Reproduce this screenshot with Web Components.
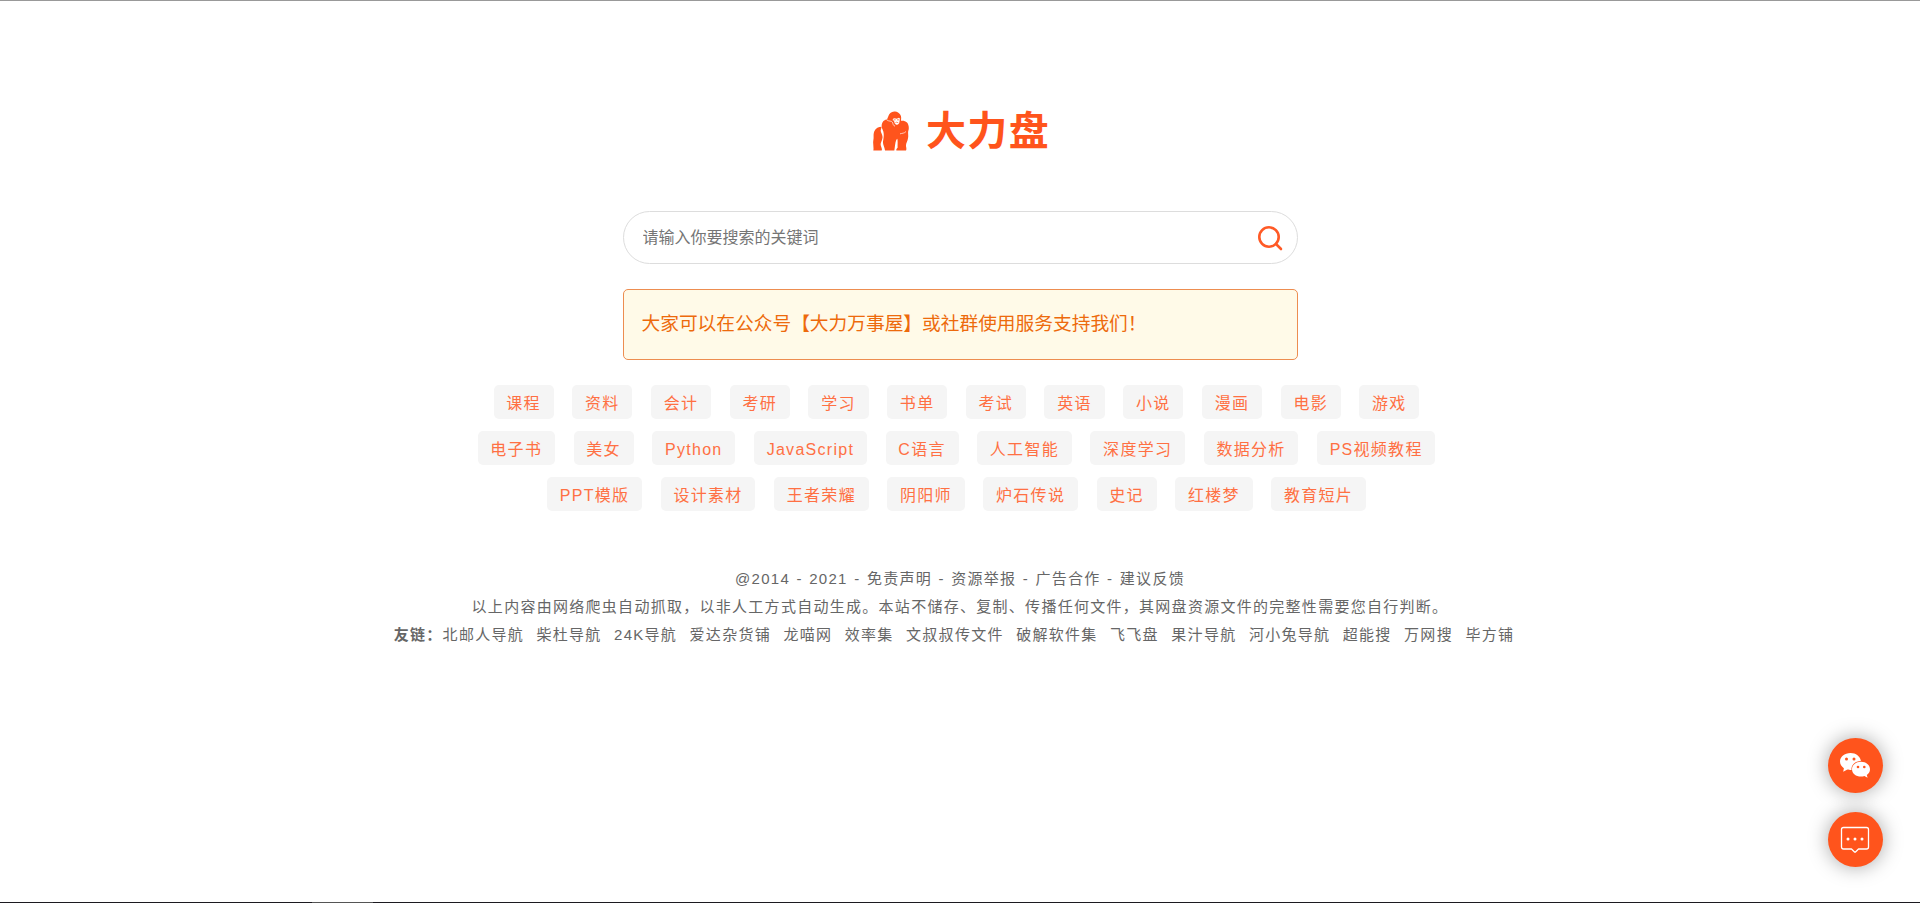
<!DOCTYPE html>
<html lang="zh-CN">
<head>
<meta charset="utf-8">
<title>大力盘</title>
<style>
html {
	height: 100%;
}

body {
	margin: 0;
	min-height: 100%;
	font-family: "Liberation Sans", "Noto Sans CJK SC", sans-serif;
	font-size: 16px;
	letter-spacing: 0.08em;
	color: #666;
	background: #fff;
}
</style>
</head>
<body>
<dali-page>
	<dali-logo>大力盘</dali-logo>
	<dali-search placeholder="请输入你要搜索的关键词"></dali-search>
	<dali-notice>大家可以在公众号【大力万事屋】或社群使用服务支持我们！</dali-notice>
	<dali-tags></dali-tags>
	<dali-footer></dali-footer>
	<dali-float slot="float"></dali-float>
</dali-page>

<script>
const TAGS = [
	'课程', '资料', '会计', '考研', '学习', '书单', '考试', '英语', '小说', '漫画', '电影', '游戏',
	'电子书', '美女', 'Python', 'JavaScript', 'C语言', '人工智能', '深度学习', '数据分析', 'PS视频教程',
	'PPT模版', '设计素材', '王者荣耀', '阴阳师', '炉石传说', '史记', '红楼梦', '教育短片',
];

const ABOUT = ['免责声明', '资源举报', '广告合作', '建议反馈'];

const FRIENDS = [
	'北邮人导航', '柴杜导航', '24K导航', '爱达杂货铺', '龙喵网', '效率集', '文叔叔传文件',
	'破解软件集', '飞飞盘', '果汁导航', '河小兔导航', '超能搜', '万网搜', '毕方铺',
];

const link = (text) => `<a href="#">${text}</a>`;

// Every element here only needs a style and some markup
class DaliElement extends HTMLElement {
	constructor() {
		super();
		this.root = this.attachShadow({ mode: 'open' });
		this.root.innerHTML = `<style>${this.css()}</style>${this.html()}`;
	}
}

class DaliPage extends DaliElement {
	css() {
		return `
		:host {
			display: flex;
			flex-direction: column;
			box-sizing: border-box;
			min-height: 100vh;
			border-top: 1px solid #999;
		}
		main {
			flex: 1;
			display: flex;
			flex-direction: column;
			align-items: center;
			padding-top: 100px;
		}
		.strip {
			height: 1px;
			background: linear-gradient(90deg, #1c1a20 312px, #555 312px, #555 373px, #1c1a20 373px);
		}`;
	}

	html() {
		return `<main><slot></slot></main><slot name="float"></slot><div class="strip"></div>`;
	}
}

class DaliLogo extends DaliElement {
	css() {
		return `
		:host {
			display: block;
			padding-left: 3px;
			color: #ff541c;
		}
		h1 {
			display: flex;
			align-items: center;
			gap: 17px;
			margin: 0;
			font-size: 40px;
			line-height: 60px;
		}
		svg {
			width: 36px;
			height: 40px;
		}`;
	}

	html() {
		return `<h1>
			<svg viewBox="40 35 108 119" aria-hidden="true">
				<g fill="#ff541c">
					<path d="M66 82C57 82 48 86 44 95C40 105 43 113 41 122C39 133 43 143 41 153H66C69 147 62 141 63 133C64 127 67 124 68 117C71 107 63 100 63 93Z"/>
					<path d="M82 60C74 60 67 67 66 78C65 87 72 93 72 102C73 112 71 119 70 127C69 135 75 143 76 153H104C106 142 106 131 110 121L113 118C115 128 113 138 114 144L110 149V153H139C141 149 140 144 139 140C138 132 144 125 145 116C147 108 144 101 146 94C149 85 147 75 142 69C137 64 130 63 124 64C124 57 126 52 122 46C118 39 111 35 104 36C94 37 88 43 86 50Z"/>
				</g>
				<g fill="#fff">
					<path d="M100 58L105 56L111 58L118 55L121 58L119 69C118 74 114 77 109 75C105 74 104 68 103 64L99 62Z"/>
				</g>
				<g fill="none" stroke="#ff541c" stroke-width="2">
					<path d="M102 61H108M112 61H119M107 70L111 68L116 70"/>
				</g>
				<path d="M81 61C89 67 95 63 98 68C101 75 100 78 106 80M139 96C134 102 127 101 121 103" fill="none" stroke="#fff" stroke-width="2"/>
			</svg>
			<slot></slot>
		</h1>`;
	}
}

class DaliSearch extends DaliElement {
	connectedCallback() {
		const input = this.root.querySelector('input');
		input.placeholder = this.getAttribute('placeholder');
		input.setAttribute('aria-label', input.placeholder);
	}

	css() {
		return `
		:host {
			display: block;
			box-sizing: border-box;
			width: 675px;
			max-width: 100%;
			margin-top: 50px;
		}
		form {
			display: flex;
			align-items: center;
			height: 51px;
			border: 1px solid #ddd;
			border-radius: 27px;
		}
		input {
			flex: 1;
			min-width: 0;
			height: 100%;
			box-sizing: border-box;
			padding: 0 19px;
			border: 0;
			outline: 0;
			background: none;
			font-family: inherit;
			font-size: 16px;
		}
		input::placeholder {
			color: #757575;
		}
		button {
			display: flex;
			margin-right: 14px;
			padding: 0;
			border: 0;
			background: none;
			cursor: pointer;
		}
		svg {
			width: 26px;
			height: 26px;
		}`;
	}

	html() {
		return `<form>
			<input type="search">
			<button type="button" aria-label="搜索">
				<svg viewBox="0 0 26 26" fill="none" stroke="#ff5a26" stroke-width="2.6" stroke-linecap="round">
					<circle cx="12" cy="12" r="9.700"/>
					<path d="M19 19L24 24"/>
				</svg>
			</button>
		</form>`;
	}
}

class DaliNotice extends DaliElement {
	css() {
		return `
		:host {
			display: flex;
			align-items: center;
			box-sizing: border-box;
			width: 675px;
			max-width: 100%;
			min-height: 71px;
			margin-top: 25px;
			padding: 0 18px 6px;
			border: 1px solid #ed8d50;
			border-radius: 5px;
			background: #fffae8;
			color: #ed6a0c;
			letter-spacing: normal;
		}
		h3 {
			margin: 0;
			font-weight: 400;
		}`;
	}

	html() {
		return `<h3><slot></slot></h3>`;
	}
}

class DaliTags extends DaliElement {
	css() {
		return `
		:host {
			display: block;
			box-sizing: border-box;
			width: 1000px;
			max-width: 100%;
			margin-top: 25px;
			padding-right: 7px;
		}
		nav {
			display: flex;
			flex-wrap: wrap;
			justify-content: center;
			gap: 12px 1.16em;
		}
		a {
			padding: 8px 0.8em 5px;
			border-radius: 5px;
			background: #f5f5f5;
			color: #ff7043;
			line-height: 21px;
			text-decoration: none;
		}`;
	}

	html() {
		return `<nav>${TAGS.map(link).join('')}</nav>`;
	}
}

class DaliFooter extends DaliElement {
	css() {
		return `
		:host {
			display: block;
			margin-top: 54px;
			font-size: 15px;
			line-height: 28px;
			text-align: center;
		}
		p {
			margin: 0;
		}
		a {
			color: inherit;
			text-decoration: none;
		}
		.about span {
			margin: 0 1px;
		}
		.friends {
			padding-right: 5px;
		}
		.friends a {
			margin-right: 7px;
		}`;
	}

	html() {
		return `<footer>
			<p class="about">${['@2014', '2021', ...ABOUT.map(link)].join(' <span>-</span> ')}</p>
			<p>以上内容由网络爬虫自动抓取，以非人工方式自动生成。本站不储存、复制、传播任何文件，其网盘资源文件的完整性需要您自行判断。</p>
			<p class="friends"><b>友链：</b>${FRIENDS.map(link).join(' ')}</p>
		</footer>`;
	}
}

// WeChat and feedback buttons, pinned over the page
class DaliFloat extends DaliElement {
	css() {
		return `
		:host {
			position: fixed;
			right: 37px;
			bottom: 36px;
			display: flex;
			flex-direction: column;
			gap: 19px;
		}
		button {
			display: flex;
			align-items: center;
			justify-content: center;
			width: 55px;
			height: 55px;
			padding: 0;
			border: 0;
			border-radius: 50%;
			background: #ff541c;
			box-shadow: 0 0 20px rgba(0, 0, 0, 0.35);
			cursor: pointer;
		}
		svg {
			width: 32px;
			height: 32px;
		}`;
	}

	html() {
		return `
		<button type="button" aria-label="微信">
			<svg viewBox="1 0 32 32">
				<path fill="#fff" d="M11.500 3C5.500 3 1 6.700 1 11.500C1 14.200 2.500 16.600 4.900 18.200L4.200 21.800L8.400 19.600C9.500 19.900 10.500 20 12.500 20C12 15 16 11 21.900 11C21.200 6.400 17 3 11.500 3Z"/>
				<path fill="#fff" d="M22 11.800C16.900 11.800 13 15 13 19.200C13 23.400 16.900 26.600 22 26.600C23.200 26.600 24.400 26.400 25.400 26L28.600 27.700L27.800 24.900C29.900 23.500 31 21.500 31 19.200C31 15 27.100 11.800 22 11.800Z"/>
				<g fill="#ff541c">
					<circle cx="7.500" cy="9" r="1.500"/>
					<circle cx="15" cy="9" r="1.500"/>
					<circle cx="19" cy="17" r="1.300"/>
					<circle cx="25.300" cy="17" r="1.300"/>
				</g>
			</svg>
		</button>
		<button type="button" aria-label="反馈">
			<svg viewBox="1 0 32 32">
				<path fill="none" stroke="#fff" stroke-width="1.300" stroke-linejoin="round" d="M4.500 3.500H27.500Q29.500 3.500 29.500 5.500V23Q29.500 25 27.500 25H19.500L16.500 28H15.500L12.500 25H4.500Q2.500 25 2.500 23V5.500Q2.500 3.500 4.500 3.500Z"/>
				<g fill="#fff">
					<circle cx="9" cy="15" r="1.500"/>
					<circle cx="16" cy="15" r="1.500"/>
					<circle cx="23" cy="15" r="1.500"/>
				</g>
			</svg>
		</button>`;
	}
}

customElements.define('dali-page', DaliPage);
customElements.define('dali-logo', DaliLogo);
customElements.define('dali-search', DaliSearch);
customElements.define('dali-notice', DaliNotice);
customElements.define('dali-tags', DaliTags);
customElements.define('dali-footer', DaliFooter);
customElements.define('dali-float', DaliFloat);
</script>
</body>
</html>
